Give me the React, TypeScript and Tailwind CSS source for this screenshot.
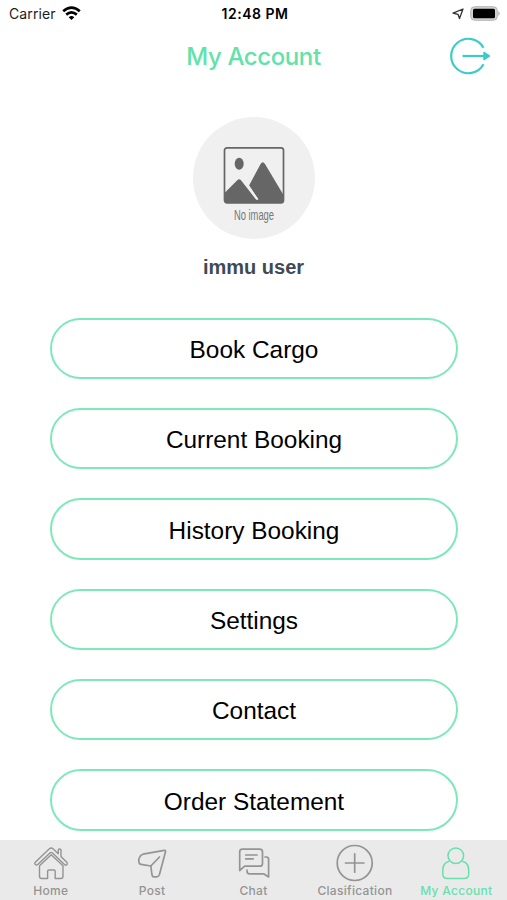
import type { ReactNode } from "react";

const menuItems = [
  "Book Cargo",
  "Current Booking",
  "History Booking",
  "Settings",
  "Contact",
  "Order Statement",
];

const HomeIcon = () => (
  <svg width="36" height="34" viewBox="0 0 36 34" fill="none" stroke="currentColor" strokeWidth="1.4" strokeLinejoin="round" strokeLinecap="round">
    <path d="M2 16.600 16.400 2.800Q18.200 1 20 2.800L25.300 7.800V4Q25.300 3 26.600 3Q28 3 28 4V10.500L34 16.600Q34.900 18 33.700 18.900Q32.500 19.500 31.500 18.500L19.500 7Q18.200 5.800 16.900 7L4.800 18.500Q3.700 19.500 2.500 18.700Q1.200 17.700 2 16.600Z" />
    <path d="M6.500 19.800V30.300Q6.500 32.500 8.700 32.500H14.600V25.300Q14.600 24 15.900 24H20.900Q22.200 24 22.200 25.300V32.500H27.800Q30 32.500 30 30.300V19.800L18.200 8.800Z" />
  </svg>
);

const PostIcon = () => (
  <svg width="36" height="34" viewBox="0 0 36 34" fill="none" stroke="currentColor" strokeWidth="1.700" strokeLinejoin="round" strokeLinecap="round">
    <path d="M31.500 5.700Q31.800 4.200 30.200 4.400L9 8.200Q7 8.700 6 10.500L4.900 13Q4.600 14.500 5 16.500Q5.300 18 7 18.300L16.800 20L18 29Q18.300 30.900 20 30.900H22.500Q24.500 30.900 25.300 29Z" />
    <path d="M16.800 20 25.500 11" />
  </svg>
);

const ChatIcon = () => (
  <svg width="36" height="34" viewBox="0 0 36 34" fill="none" stroke="currentColor" strokeWidth="1.700" strokeLinejoin="round" strokeLinecap="round">
    <path d="M3.700 24.500V5.700Q3.700 3.200 6.200 3.200H23.700Q26.500 3.200 26.500 6V17.400Q26.500 20.200 23.700 20.200H8.600Z" />
    <path d="M9.700 9H21M9.700 12.800H17.200" />
    <path d="M29 11H30.200Q32.600 11 32.600 13.400V31L27.700 27.800H13.500Q11 27.800 11 25.300V24.200" />
  </svg>
);

const ClassificationIcon = () => (
  <svg width="38" height="38" viewBox="0 0 38 38" fill="none" stroke="currentColor" strokeWidth="1.700" strokeLinecap="round">
    <circle cx="18.700" cy="19" r="17.500" />
    <path d="M18.700 9.800V28.200M9.500 19H27.900" />
  </svg>
);

const AccountIcon = () => (
  <svg width="36" height="34" viewBox="0 0 36 34" fill="none" stroke="currentColor" strokeWidth="1.500" strokeLinejoin="round">
    <circle cx="17.800" cy="9.700" r="7.800" />
    <path d="M11.300 15.200Q4.800 16.500 4.800 24.500V28Q4.800 32.500 9.300 32.500H26.200Q30.700 32.500 30.700 28V24.500Q30.700 16.500 24.300 15.200" />
  </svg>
);

const Tab = ({ label, icon, active }: { label: string; icon: ReactNode; active?: boolean }) => (
  <button
    className={`flex flex-1 flex-col items-center ${active ? "text-[#67e0ae]" : "text-[#949494]"}`}
  >
    <span className="flex h-[45px] items-center justify-center">{icon}</span>
    <span className="-mt-px font-['Inter'] text-[12px] leading-[13px] font-medium tracking-[0.3px] whitespace-nowrap">
      {label}
    </span>
  </button>
);

const StatusBar = () => (
  <div className="grid h-[27px] grid-cols-3 items-center pr-[6px] pl-[9px] font-['Inter'] text-[14px] text-[#1c1c1c]">
    <div className="flex items-center gap-[6px]">
      <span className="tracking-[0.1px]">Carrier</span>
      <svg width="19" height="15" viewBox="0 0 19 15" fill="none" stroke="#000" strokeWidth="2.700">
        <path d="M1.200 5.200Q9.500-2 17.800 5.200" />
        <path d="M4.200 8.600Q9.500 4.200 14.800 8.600" />
        <path d="M6.700 11.200Q9.500 8.900 12.300 11.200L9.500 14Z" fill="#000" stroke="none" />
      </svg>
    </div>
    <span className="text-center text-[14px] font-semibold tracking-[0.500px] whitespace-nowrap text-black">
      12:48 PM
    </span>
    <div className="flex items-center justify-end gap-[6px]">
      <svg width="12" height="12" viewBox="0 0 12 12" fill="none" stroke="#333" strokeWidth="1.300" strokeLinejoin="round">
        <path d="M11 1 7.500 10.500 6 6.300 1 5.200Z" />
      </svg>
      <svg width="31" height="15" viewBox="0 0 31 15">
        <rect x="0.700" y="0.700" width="26.600" height="13.600" rx="4" fill="#d2d2d2" stroke="#b4b4b4" strokeWidth="1" />
        <rect x="3" y="2.700" width="22" height="9.600" rx="1.500" fill="#000" />
        <path d="M28.400 5Q31 7.500 28.400 10Z" fill="#aaa" />
      </svg>
    </div>
  </div>
);

const Avatar = () => (
  <div className="flex size-[122px] flex-col items-center rounded-full bg-[#f0f0f0] pt-[29px]">
    <svg width="62" height="58" viewBox="0 0 62 58">
      <rect x="1.500" y="1.800" width="59" height="55" rx="2.500" fill="none" stroke="#666" strokeWidth="1.700" />
      <ellipse cx="16.200" cy="17.800" rx="4.500" ry="6" fill="#666" />
      <path d="M1.500 47 14.300 34.200Q16.200 32.200 18 34.200L33 53.500V56.800H4Q1.500 56.800 1.500 54Z" fill="#666" />
      <path d="M25.800 40 37.600 18Q39.800 14.500 42 18L60.500 49V54.300Q60.500 56.800 58 56.800H31V53.500H35.500Z" fill="#666" />
      <path d="M24.500 38.500 34.500 53.500" stroke="#f0f0f0" strokeWidth="1.800" />
    </svg>
    <span className="mt-[4px] scale-x-[0.670] font-['Liberation_Sans'] text-[14px] leading-[15px] whitespace-nowrap text-[#777]">
      No image
    </span>
  </div>
);

const App = () => {
  return (
    <div className="flex h-[900px] w-[507px] flex-col overflow-hidden bg-white">
      <StatusBar />

      {/* Header */}
      <header className="grid h-[58px] grid-cols-[60px_1fr_60px] items-center">
        <h1 className="col-start-2 pt-[2px] text-center font-['Inter'] text-[24px] font-medium tracking-[-0.400px] text-[#62e2a8]">
          My Account
        </h1>
        <button className="pl-[2px]">
          <svg width="42" height="38" viewBox="0 0 42 38" fill="none" stroke="#3bcbc9" strokeWidth="2.200">
            <path d="M34.500 10.800A17.200 17.200 0 1 0 34.500 27.200" />
            <path d="M13.500 19H35" />
            <path d="M35 15.500 40.300 19 35 22.500Z" fill="#3bcbc9" strokeWidth="1.500" strokeLinejoin="round" />
          </svg>
        </button>
      </header>

      <main className="flex min-h-0 flex-1 flex-col items-center pt-[32px]">
        <Avatar />
        <p className="mt-[16px] font-['Liberation_Sans'] text-[20px] leading-6 font-bold text-[#3f4a54]">
          immu user
        </p>

        {/* Menu */}
        <div className="mt-[38.500px] flex w-[409px] flex-col gap-[29px] pl-px">
          {menuItems.map((item) => (
            <button
              key={item}
              className="flex h-[61.400px] shrink-0 items-center justify-center rounded-full border-2 border-[#7ee8ba] pt-[4px] font-['Liberation_Sans'] text-[24.400px] text-black"
            >
              {item}
            </button>
          ))}
        </div>
      </main>

      {/* Tab bar */}
      <nav className="flex h-[60px] shrink-0 bg-[#eaeaea]">
        <Tab label="Home" icon={<HomeIcon />} />
        <Tab label="Post" icon={<PostIcon />} />
        <Tab label="Chat" icon={<ChatIcon />} />
        <Tab label="Clasification" icon={<ClassificationIcon />} />
        <Tab label="My Account" icon={<AccountIcon />} active />
      </nav>
    </div>
  );
};

export default App;
